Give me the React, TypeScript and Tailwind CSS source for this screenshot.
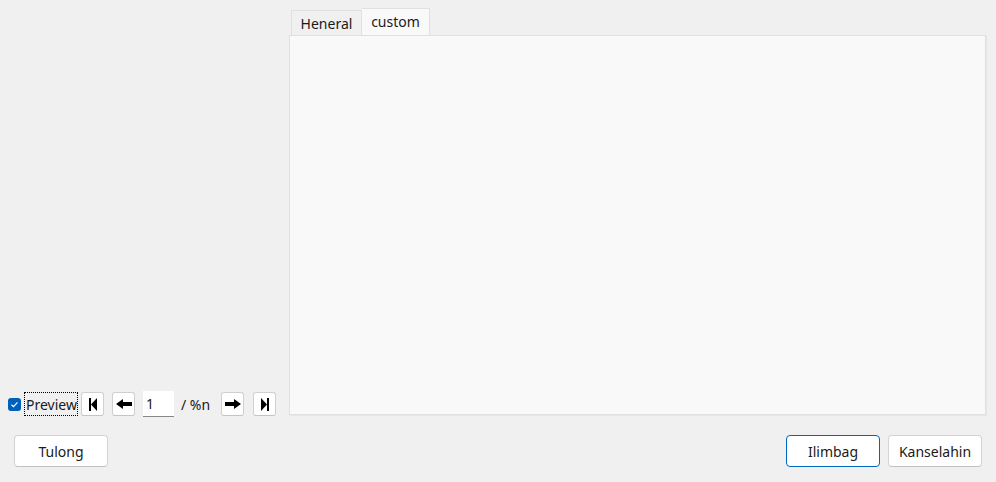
import React from 'react';

const font = { fontFamily: '"Segoe UI", "Noto Sans", "Liberation Sans", sans-serif' };

function NavButton({ children }: { children: React.ReactNode }) {
  return (
    <button className="flex h-[24px] w-[23px] items-center justify-center rounded-[3px] border border-[#d0d0d0] border-b-[#c4c4c4] bg-white">
      {children}
    </button>
  );
}

function FirstIcon() {
  return (
    <svg width="8" height="13" viewBox="0 0 8 13">
      <rect x="0" y="0" width="2" height="13" fill="#000" />
      <polygon points="8,0 8,13 2,6.5" fill="#000" />
    </svg>
  );
}

function LastIcon() {
  return (
    <svg width="8" height="13" viewBox="0 0 8 13">
      <polygon points="0,0 0,13 6,6.5" fill="#000" />
      <rect x="6" y="0" width="2" height="13" fill="#000" />
    </svg>
  );
}

function LeftArrow() {
  return (
    <svg width="16" height="10" viewBox="0 0 16 10">
      <polygon points="0,5 7,0 7,3 16,3 16,7 7,7 7,10" fill="#000" />
    </svg>
  );
}

function RightArrow() {
  return (
    <svg width="16" height="10" viewBox="0 0 16 10">
      <polygon points="16,5 9,0 9,3 0,3 0,7 9,7 9,10" fill="#000" />
    </svg>
  );
}

function DialogButton({ label, primary }: { label: string; primary?: boolean }) {
  return (
    <button
      className={
        primary
          ? "h-8 w-[94px] rounded-[4px] border border-[#0067c0] bg-white text-[14px] text-[#1a1a1a]"
          : "h-8 w-[94px] rounded-[4px] border border-[#d3d3d3] border-b-[#c0c0c0] bg-white text-[14px] text-[#1a1a1a]"
      }
    >
      {label}
    </button>
  );
}

export default function App() {
  return (
    <div className="flex h-[482px] w-[996px] flex-col bg-[#f0f0f0] text-[#1a1a1a]" style={font}>
      <div className="flex h-[417px] pt-[8px] pr-[10px]">
        <div className="flex w-[289px] items-end">
          <div className="flex h-[26px] items-center pl-2">
            <div className="flex h-[13px] w-[13px] items-center justify-center rounded-[3px] bg-[#005fb8]">
              <svg width="9" height="9" viewBox="0 0 9 9">
                <path d="M1.5 4.8 L3.5 6.6 L7.5 2.4" stroke="#fff" strokeWidth="1.2" fill="none" />
              </svg>
            </div>
            <span className="ml-[3px] flex h-[24px] w-[54px] items-center border border-dotted border-[#000] pl-[1px] text-[14px]">
              Preview
            </span>
            <div className="ml-[3px]">
              <NavButton><FirstIcon /></NavButton>
            </div>
            <div className="ml-[8px]">
              <NavButton><LeftArrow /></NavButton>
            </div>
            <div className="ml-[8px] flex h-[26px] w-[31px] items-center border-b border-[#868686] bg-white pl-[3px] text-[14px]">
              1
            </div>
            <span className="ml-[7px] w-[31px] text-[14px]">/ %n</span>
            <div className="ml-[9px]">
              <NavButton><RightArrow /></NavButton>
            </div>
            <div className="ml-[9px]">
              <NavButton><LastIcon /></NavButton>
            </div>
          </div>
        </div>
        <div className="mb-[2px] flex flex-1 flex-col">
          <div className="flex h-[27px] items-end pl-[2px]">
            <div className="flex h-[25px] w-[71px] items-center justify-center border border-b-0 border-[#e0e0e0] bg-[#f0f0f0] text-[14px]">
              Heneral
            </div>
            <div className="flex h-[27px] w-[68px] items-center justify-center border border-b-0 border-l-0 border-[#e0e0e0] bg-[#f9f9f9] pb-[2px] text-[14px]">
              custom
            </div>
          </div>
          <div className="flex-1 border border-[#e0e0e0] bg-[#f9f9f9] shadow-[1px_1px_1px_rgba(0,0,0,0.04)]" />
        </div>
      </div>
      <div className="flex flex-1 items-start justify-between px-[14px] pt-[18px]">
        <DialogButton label="Tulong" />
        <div className="flex gap-2">
          <DialogButton label="Ilimbag" primary />
          <DialogButton label="Kanselahin" />
        </div>
      </div>
    </div>
  );
}
